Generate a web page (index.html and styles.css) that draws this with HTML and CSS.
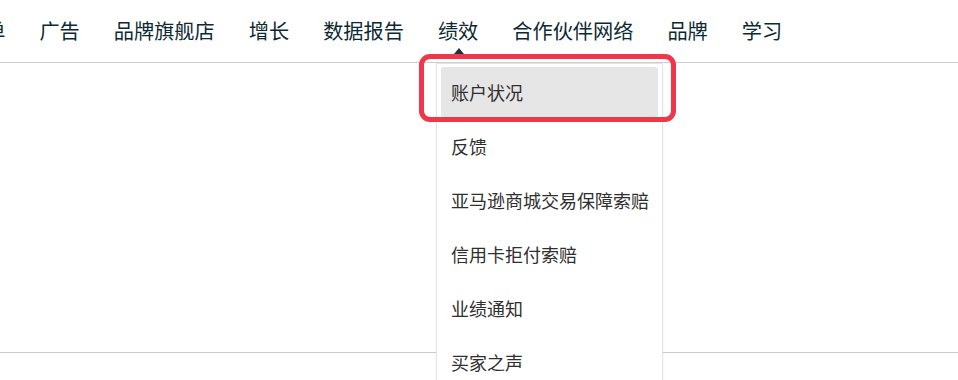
FILE: index.html
```html
<!DOCTYPE html>
<html>
<head>
    <title>绩效</title>
    <link rel="stylesheet" href="styles.css">
</head>
<body>
    <div class="top-nav">
        <ul class="nav-list">
            <li class="nav-item">订单</li>
            <li class="nav-item">广告</li>
            <li class="nav-item">品牌旗舰店</li>
            <li class="nav-item">增长</li>
            <li class="nav-item">数据报告</li>
            <li class="nav-item nav-item-open">
                绩效
                <span class="nav-caret"></span>
                <div class="dropdown">
                    <a class="dropdown-link active">账户状况</a>
                    <a class="dropdown-link">反馈</a>
                    <a class="dropdown-link">亚马逊商城交易保障索赔</a>
                    <a class="dropdown-link">信用卡拒付索赔</a>
                    <a class="dropdown-link">业绩通知</a>
                    <a class="dropdown-link">买家之声</a>
                </div>
                <span class="highlight-box"></span>
            </li>
            <li class="nav-item">合作伙伴网络</li>
            <li class="nav-item">品牌</li>
            <li class="nav-item">学习</li>
        </ul>
    </div>

    <div class="page-body"></div>
</body>
</html>
```

FILE: styles.css
```css
html, body {
    height: 100%;
}

body {
    margin: 0;
    background-color: #ffffff;
    font-family: "Noto Sans CJK SC", "Noto Sans", sans-serif;
    overflow: hidden;
}

.top-nav {
    height: 62px;
    border-bottom: 1px solid #cfcfcf;
}

.nav-list {
    display: flex;
    gap: 34px;
    height: 100%;
    margin: 0 0 0 -35px;
    padding: 0;
    list-style: none;
    white-space: nowrap;
}

.nav-item {
    position: relative;
    display: flex;
    align-items: center;
    padding-bottom: 2px;
    font-size: 20.2px;
    color: #0c2a33;
}

.nav-caret {
    position: absolute;
    top: 48px;
    left: 50%;
    margin-left: -4px;
    border-left: 5px solid transparent;
    border-right: 5px solid transparent;
    border-bottom: 6px solid #232f3e;
}

.dropdown {
    position: absolute;
    top: 63px;
    left: -2px;
    z-index: 2;
    width: 217px;
    height: 313px;
    padding: 3px 4px 0;
    overflow: hidden;
    background-color: #ffffff;
    border: 1px solid #e4e4e4;
    border-bottom: none;
    box-shadow: 0 1px 3px rgba(0, 0, 0, 0.06);
}

.dropdown-link {
    display: flex;
    align-items: center;
    height: 50px;
    margin-bottom: 4px;
    padding: 0 10px;
    border-radius: 3px;
    font-size: 18px;
    color: #2f2f2f;
}

.dropdown-link.active {
    background-color: #e6e6e6;
}

/* red annotation round the first entry */
.highlight-box {
    position: absolute;
    top: 54px;
    left: -19px;
    z-index: 3;
    width: 247px;
    height: 58px;
    border: 5px solid #f0364a;
    border-radius: 11px;
}

.page-body {
    height: 289px;
    border-bottom: 1px solid #cccccc;
}
```
